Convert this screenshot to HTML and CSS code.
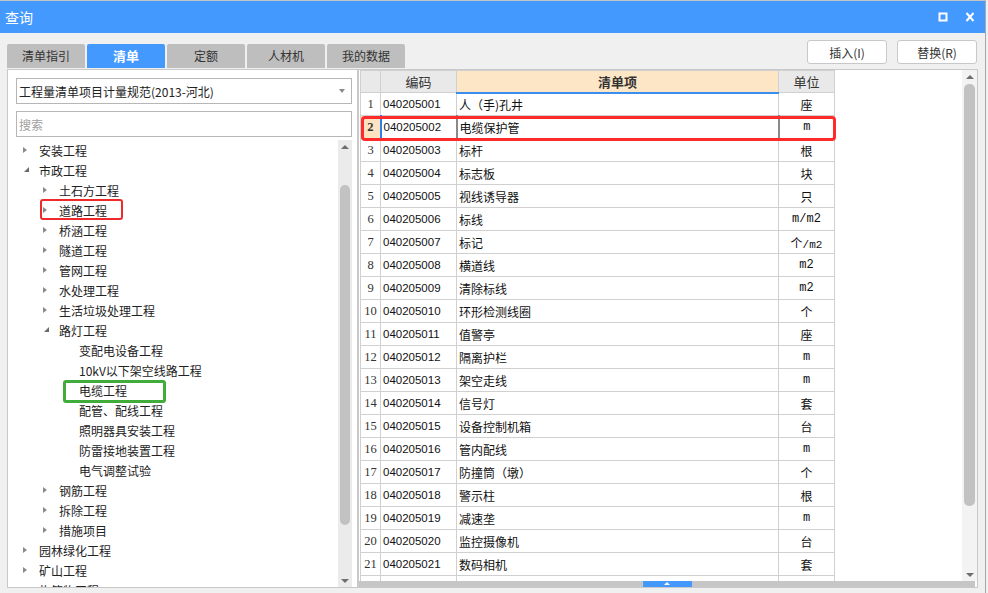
FILE: index.html
```html
<!DOCTYPE html>
<html lang="zh-CN">
<head>
<meta charset="utf-8">
<title>查询</title>
<link rel="stylesheet" href="styles.css">
</head>
<body>
<div class="window">
  <div class="titlebar">
    <span class="title">查询</span>
    <div class="win-btns">
      <svg class="ico" width="10" height="10" viewBox="0 0 10 10"><rect x="1.5" y="1.5" width="7" height="7" fill="none" stroke="#fff" stroke-width="2"/></svg>
      <svg class="ico" width="10" height="10" viewBox="0 0 10 10"><path d="M1.5 1 L8.5 9 M8.5 1 L1.5 9" stroke="#fff" stroke-width="2"/></svg>
    </div>
  </div>

  <div class="toolbar">
    <div class="tabs">
      <div class="tab">清单指引</div>
      <div class="tab active">清单</div>
      <div class="tab">定额</div>
      <div class="tab">人材机</div>
      <div class="tab">我的数据</div>
    </div>
    <div class="actions">
      <button class="btn">插入(I)</button>
      <button class="btn">替换(R)</button>
    </div>
  </div>

  <div class="main">
    <div class="left-panel">
      <div class="select"><span>工程量清单项目计量规范(2013-河北)</span><span class="caret"></span></div>
      <div class="search">搜索</div>
      <div class="tree-wrap">
        <div class="tree">
          <div class="tree-row l0"><span class="twisty closed"></span><span>安装工程</span></div>
          <div class="tree-row l0"><span class="twisty open"></span><span>市政工程</span></div>
          <div class="tree-row l1"><span class="twisty closed"></span><span>土石方工程</span></div>
          <div class="tree-row l1"><span class="twisty closed"></span><span>道路工程</span><span class="mark mark-red"></span></div>
          <div class="tree-row l1"><span class="twisty closed"></span><span>桥涵工程</span></div>
          <div class="tree-row l1"><span class="twisty closed"></span><span>隧道工程</span></div>
          <div class="tree-row l1"><span class="twisty closed"></span><span>管网工程</span></div>
          <div class="tree-row l1"><span class="twisty closed"></span><span>水处理工程</span></div>
          <div class="tree-row l1"><span class="twisty closed"></span><span>生活垃圾处理工程</span></div>
          <div class="tree-row l1"><span class="twisty open"></span><span>路灯工程</span></div>
          <div class="tree-row l2"><span class="twisty"></span><span>变配电设备工程</span></div>
          <div class="tree-row l2"><span class="twisty"></span><span>10kV以下架空线路工程</span></div>
          <div class="tree-row l2"><span class="twisty"></span><span>电缆工程</span><span class="mark mark-green"></span></div>
          <div class="tree-row l2"><span class="twisty"></span><span>配管、配线工程</span></div>
          <div class="tree-row l2"><span class="twisty"></span><span>照明器具安装工程</span></div>
          <div class="tree-row l2"><span class="twisty"></span><span>防雷接地装置工程</span></div>
          <div class="tree-row l2"><span class="twisty"></span><span>电气调整试验</span></div>
          <div class="tree-row l1"><span class="twisty closed"></span><span>钢筋工程</span></div>
          <div class="tree-row l1"><span class="twisty closed"></span><span>拆除工程</span></div>
          <div class="tree-row l1"><span class="twisty closed"></span><span>措施项目</span></div>
          <div class="tree-row l0"><span class="twisty closed"></span><span>园林绿化工程</span></div>
          <div class="tree-row l0"><span class="twisty closed"></span><span>矿山工程</span></div>
          <div class="tree-row l0"><span class="twisty closed"></span><span>构筑物工程</span></div>
        </div>
        <div class="vscroll vscroll-tree">
          <span class="arr-up"></span>
          <span class="thumb"></span>
          <span class="arr-down"></span>
        </div>
      </div>
    </div>

    <div class="right-panel">
      <div class="grid-area">
        <div class="table-wrap">
          <table class="grid">
            <colgroup><col class="c-no"><col class="c-code"><col class="c-name"><col class="c-unit"></colgroup>
            <thead>
              <tr><th></th><th>编码</th><th class="th-active">清单项</th><th>单位</th></tr>
            </thead>
            <tbody>
              <tr><td class="no">1</td><td class="code">040205001</td><td class="name">人（手)孔井</td><td class="unit">座</td></tr>
              <tr class="sel"><td class="no">2</td><td class="code">040205002</td><td class="name">电缆保护管</td><td class="unit lat">m</td></tr>
              <tr><td class="no">3</td><td class="code">040205003</td><td class="name">标杆</td><td class="unit">根</td></tr>
              <tr><td class="no">4</td><td class="code">040205004</td><td class="name">标志板</td><td class="unit">块</td></tr>
              <tr><td class="no">5</td><td class="code">040205005</td><td class="name">视线诱导器</td><td class="unit">只</td></tr>
              <tr><td class="no">6</td><td class="code">040205006</td><td class="name">标线</td><td class="unit lat">m/m2</td></tr>
              <tr><td class="no">7</td><td class="code">040205007</td><td class="name">标记</td><td class="unit">个<span class="lat">/m2</span></td></tr>
              <tr><td class="no">8</td><td class="code">040205008</td><td class="name">横道线</td><td class="unit lat">m2</td></tr>
              <tr><td class="no">9</td><td class="code">040205009</td><td class="name">清除标线</td><td class="unit lat">m2</td></tr>
              <tr><td class="no">10</td><td class="code">040205010</td><td class="name">环形检测线圈</td><td class="unit">个</td></tr>
              <tr><td class="no">11</td><td class="code">040205011</td><td class="name">值警亭</td><td class="unit">座</td></tr>
              <tr><td class="no">12</td><td class="code">040205012</td><td class="name">隔离护栏</td><td class="unit lat">m</td></tr>
              <tr><td class="no">13</td><td class="code">040205013</td><td class="name">架空走线</td><td class="unit lat">m</td></tr>
              <tr><td class="no">14</td><td class="code">040205014</td><td class="name">信号灯</td><td class="unit">套</td></tr>
              <tr><td class="no">15</td><td class="code">040205015</td><td class="name">设备控制机箱</td><td class="unit">台</td></tr>
              <tr><td class="no">16</td><td class="code">040205016</td><td class="name">管内配线</td><td class="unit lat">m</td></tr>
              <tr><td class="no">17</td><td class="code">040205017</td><td class="name">防撞筒（墩）</td><td class="unit">个</td></tr>
              <tr><td class="no">18</td><td class="code">040205018</td><td class="name">警示柱</td><td class="unit">根</td></tr>
              <tr><td class="no">19</td><td class="code">040205019</td><td class="name">减速垄</td><td class="unit lat">m</td></tr>
              <tr><td class="no">20</td><td class="code">040205020</td><td class="name">监控摄像机</td><td class="unit">台</td></tr>
              <tr><td class="no">21</td><td class="code">040205021</td><td class="name">数码相机</td><td class="unit">套</td></tr>
              <tr><td class="no"></td><td class="code"></td><td class="name"></td><td class="unit"></td></tr>
            </tbody>
          </table>
          <span class="row-mark"></span>
        </div>
        <div class="vscroll vscroll-grid">
          <span class="arr-up"></span>
          <span class="thumb"></span>
          <span class="arr-down"></span>
        </div>
      </div>
      <div class="hscroll"><span class="hthumb"><span class="hthumb-arr"></span></span></div>
    </div>
  </div>
</div>
</body>
</html>
```

FILE: styles.css
```css
* { box-sizing: border-box; }

body {
  margin: 0;
  background: #f0f0f0;
  font-family: "Noto Sans CJK SC", "Noto Sans", sans-serif;
  font-size: 12px;
  color: #222;
  overflow: hidden;
}

.window {
  width: 986px;
  height: 593px;
  border-top: 1px solid #c4c4c4;
  border-right: 1px solid #a8a8a8;
  display: flex;
  flex-direction: column;
}

/* title bar */
.titlebar {
  flex: none;
  height: 32px;
  background: #4499ff;
  color: #fff;
  display: flex;
  align-items: center;
  padding: 0 10px 0 5px;
}
.title { flex: 1; font-size: 14px; line-height: 1; }
.win-btns { display: flex; align-items: center; gap: 17px; }
.ico { display: block; }

/* toolbar */
.toolbar {
  flex: none;
  height: 36px;
  display: flex;
  padding: 0 8px 0 7px;
}
.tabs {
  display: flex;
  gap: 2px;
  align-self: flex-end;
  margin-bottom: 1px;
}
.tab {
  width: 78px;
  height: 24px;
  line-height: 24px;
  text-align: center;
  background: #bebebe;
  border-radius: 2px 2px 0 0;
  color: #333;
  font-size: 12px;
}
.tab.active {
  background: #4499ff;
  color: #fff;
  font-weight: bold;
  font-size: 13px;
}
.actions {
  margin-left: auto;
  margin-top: 7px;
  align-self: flex-start;
  display: flex;
  gap: 10px;
}
.btn {
  width: 80px;
  height: 24px;
  padding: 0;
  background: #fff;
  border: 1px solid #c8c8c8;
  border-radius: 3px;
  font-family: inherit;
  font-size: 12px;
  color: #333;
}

/* main */
.main {
  flex: none;
  height: 519px;
  display: flex;
  padding: 0 7px;
}

.left-panel {
  width: 351px;
  flex: none;
  background: #fff;
  border: 1px solid #c9c9c9;
  display: flex;
  flex-direction: column;
  padding: 8px 5px 0 8px;
}
.select {
  flex: none;
  height: 26px;
  border: 1px solid #b6b6b6;
  display: flex;
  align-items: center;
  padding-left: 2px;
  color: #222;
}
.caret {
  margin-left: auto;
  margin-right: 6px;
  width: 0;
  height: 0;
  border-top: 4px solid #8a8a8a;
  border-left: 3px solid transparent;
  border-right: 3px solid transparent;
}
.search {
  flex: none;
  height: 26px;
  margin-top: 7px;
  border: 1px solid #b6b6b6;
  display: flex;
  align-items: center;
  padding-left: 2px;
  color: #a0a0a0;
}
.tree-wrap {
  flex: 1;
  min-height: 0;
  margin-top: 3px;
  display: flex;
  overflow: hidden;
}
.tree { flex: 1; overflow: hidden; }
.tree-row {
  position: relative;
  height: 20px;
  display: flex;
  align-items: center;
  white-space: nowrap;
  color: #222;
}
.tree-row.l1 { padding-left: 20px; }
.tree-row.l2 { padding-left: 40px; }
.twisty {
  flex: none;
  width: 16px;
  height: 20px;
  margin-left: 7px;
  position: relative;
}
.twisty.closed::before {
  content: "";
  position: absolute;
  left: 0;
  top: 7px;
  border-left: 4px solid #8a8a8a;
  border-top: 3.5px solid transparent;
  border-bottom: 3.5px solid transparent;
}
.twisty.open::before {
  content: "";
  position: absolute;
  left: 1px;
  top: 7px;
  border-bottom: 5px solid #6a6a6a;
  border-left: 5px solid transparent;
}
.mark {
  position: absolute;
  border-radius: 3px;
}
.mark-red {
  left: 24px;
  top: -1px;
  width: 83px;
  height: 21px;
  border: 2px solid #ee2a2a;
}
.mark-green {
  left: 47px;
  top: 0;
  width: 103px;
  height: 23px;
  border: 3px solid #40ad3a;
}

/* scrollbars */
.vscroll {
  flex: none;
  position: relative;
  background: #ebebeb;
}
.vscroll-tree { width: 14px; }
.vscroll-grid { width: 15px; background: #f3f3f3; }
.arr-up, .arr-down {
  position: absolute;
  left: 50%;
  margin-left: -4px;
  width: 0;
  height: 0;
  border-left: 4px solid transparent;
  border-right: 4px solid transparent;
}
.arr-up { top: 5px; border-bottom: 4px solid #6e6e6e; }
.arr-down { bottom: 4px; border-top: 4px solid #6e6e6e; }
.thumb {
  position: absolute;
  left: 2px;
  right: 2px;
  background: #c2c2c2;
  border-radius: 5px;
}
.vscroll-tree .thumb { top: 45px; height: 340px; }
.vscroll-grid .thumb { top: 14px; height: 422px; }

/* right panel */
.right-panel {
  flex: 1;
  background: #fff;
  border: 1px solid #c9c9c9;
  display: flex;
  flex-direction: column;
}
.grid-area {
  flex: none;
  height: 511px;
  display: flex;
}
.table-wrap {
  flex: 1;
  position: relative;
  overflow: hidden;
  padding-left: 1px;
}
.grid {
  border-collapse: collapse;
  table-layout: fixed;
  width: 474px;
}
.c-no { width: 20px; }
.c-code { width: 76px; }
.c-name { width: 322px; }
.c-unit { width: 56px; }
.grid th, .grid td {
  border: 1px solid #d0d0d0;
  padding: 0;
  white-space: nowrap;
  overflow: hidden;
}
.grid th {
  height: 22px;
  background: #e9e9e9;
  font-weight: normal;
  font-size: 13px;
  color: #333;
  text-align: center;
}
.grid th.th-active {
  background: #fde6c6;
  font-weight: bold;
  border-bottom: 2px solid #3a8ef0;
}
.grid td { height: 23px; font-size: 12px; color: #111; }
.grid td.no {
  text-align: center;
  font-family: "Liberation Serif", serif;
  font-size: 12.5px;
  color: #333;
}
.grid td.code {
  font-family: "Liberation Sans", sans-serif;
  font-size: 11.5px;
  padding-left: 2px;
}
.grid td.name { padding-left: 2px; }
.grid td.unit { text-align: center; }
.lat { font-family: "Liberation Mono", monospace; font-size: 11px; }
.grid tr.sel td.no { background: #fde2c2; font-weight: bold; }
.grid tr.sel td.code { border-left: 2px solid #2f7fe6; }
.grid tr.sel td.name { border-left: 2px solid #8a8a8a; border-right: 2px solid #8a8a8a; }
.row-mark {
  position: absolute;
  left: 2px;
  top: 46px;
  width: 475px;
  height: 25px;
  border: 3px solid #ff2b2b;
  border-radius: 4px;
}

.hscroll {
  flex: none;
  height: 6px;
  margin-right: 2px;
  background: #c6c6c6;
  position: relative;
}
.hthumb {
  position: absolute;
  left: 284px;
  top: 0;
  width: 49px;
  height: 6px;
  background: #4499ff;
}
.hthumb-arr {
  position: absolute;
  left: 21px;
  top: 1px;
  border-bottom: 3px solid #fff;
  border-left: 3px solid transparent;
  border-right: 3px solid transparent;
}
```
